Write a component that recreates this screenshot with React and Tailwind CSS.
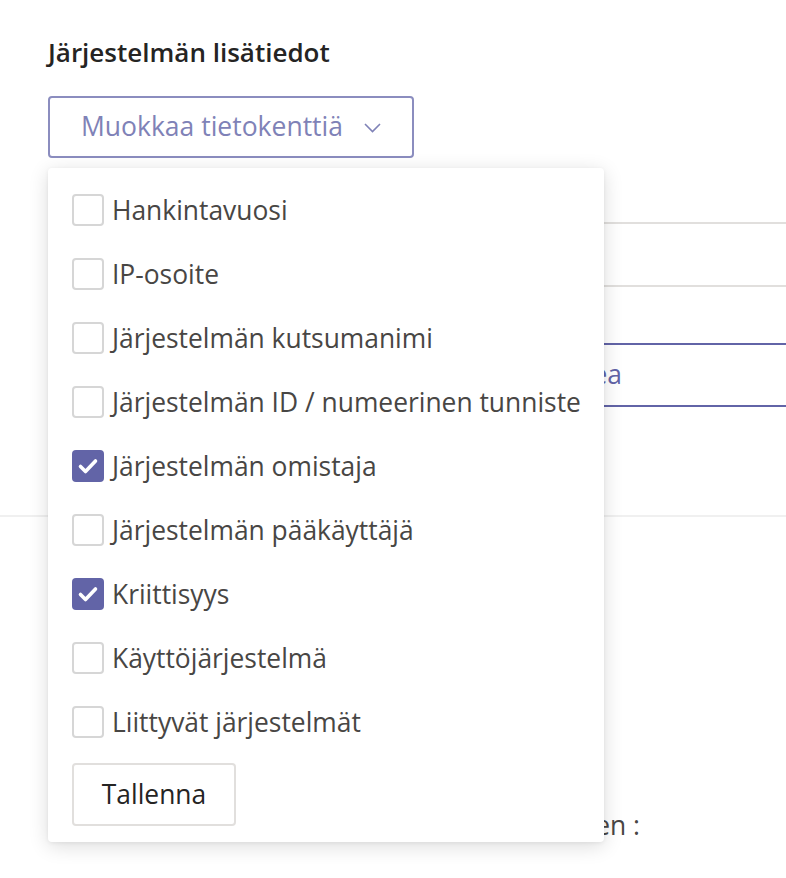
import React from "react";

const items = [
  { label: "Hankintavuosi", checked: false },
  { label: "IP-osoite", checked: false },
  { label: "Järjestelmän kutsumanimi", checked: false },
  { label: "Järjestelmän ID / numeerinen tunniste", checked: false },
  { label: "Järjestelmän omistaja", checked: true },
  { label: "Järjestelmän pääkäyttäjä", checked: false },
  { label: "Kriittisyys", checked: true },
  { label: "Käyttöjärjestelmä", checked: false },
  { label: "Liittyvät järjestelmät", checked: false },
];

function Checkbox({ checked }) {
  if (checked) {
    return (
      <span className="flex h-8 w-8 shrink-0 items-center justify-center rounded-[4px] bg-[#6264a7]">
        <svg width="32" height="32" viewBox="0 0 32 32" fill="none">
          <path d="M8.5 16.5 L13.5 21.5 L23.5 11" stroke="#ffffff" strokeWidth="3.6" strokeLinecap="round" strokeLinejoin="round" />
        </svg>
      </span>
    );
  }
  return <span className="h-8 w-8 shrink-0 rounded-[4px] border-2 border-[#d6d6d6] bg-white" />;
}

export default function App() {
  return (
    <div className="relative min-h-[878px] w-full overflow-hidden bg-white" style={{ fontFamily: '"Open Sans", "Noto Sans", sans-serif' }}>
      <div className="pl-12 pt-[33px]">
        <h2 className="text-[26px] font-semibold leading-[38px] text-[#252423]">Järjestelmän lisätiedot</h2>
        <div className="relative mt-[25px]">
          <button className="flex h-[62px] w-[366px] items-center rounded-[4px] border-2 border-[#8b8dbf] bg-white pl-[31px] text-[26.5px] text-[#7f82b7]">
            <span>Muokkaa tietokenttiä</span>
            <svg className="ml-[21px] mt-[2px]" width="17" height="10" viewBox="0 0 17 10" fill="none">
              <path d="M1 1 L8.5 8.5 L16 1" stroke="#7f82b7" strokeWidth="1.6" />
            </svg>
          </button>

          {/* background fields */}
          <div className="h-[66px] border-b-2 border-[#e1dfdd]" />
          <div className="h-[63px] border-b-2 border-[#e1dfdd]" />
          <div className="mt-[56px] flex h-[64px] items-center border-y-2 border-[#6264a7]">
            <div className="w-[574px] text-right text-[26.4px] text-[#6264a7]">Lisää idea</div>
          </div>

          {/* dropdown panel */}
          <div className="absolute left-0 top-[72px] z-10 w-[556px] rounded-[4px] bg-white pb-4 pl-6 pt-[10px] shadow-[0_4px_20px_rgba(0,0,0,0.14),0_1px_4px_rgba(0,0,0,0.06)]">
            {items.map((it) => (
              <div key={it.label} className="flex h-16 items-center gap-[8px]">
                <Checkbox checked={it.checked} />
                <span className="text-[26.4px] leading-none text-[#484644]">{it.label}</span>
              </div>
            ))}
            <button className="mt-[9px] flex h-[63px] w-[164px] items-center justify-center rounded-[4px] border-2 border-[#e1dfdd] bg-white text-[26.4px] text-[#252423]">
              Tallenna
            </button>
          </div>
        </div>
      </div>
      <div className="mt-[108px] border-b-2 border-[#f0f0f0]" />
      <div className="pl-12 pt-[290px]">
        <div className="w-[592px] text-right text-[26.4px] leading-[36px] text-[#484644]">Järjestelmän elinkaaren :</div>
      </div>
    </div>
  );
}
